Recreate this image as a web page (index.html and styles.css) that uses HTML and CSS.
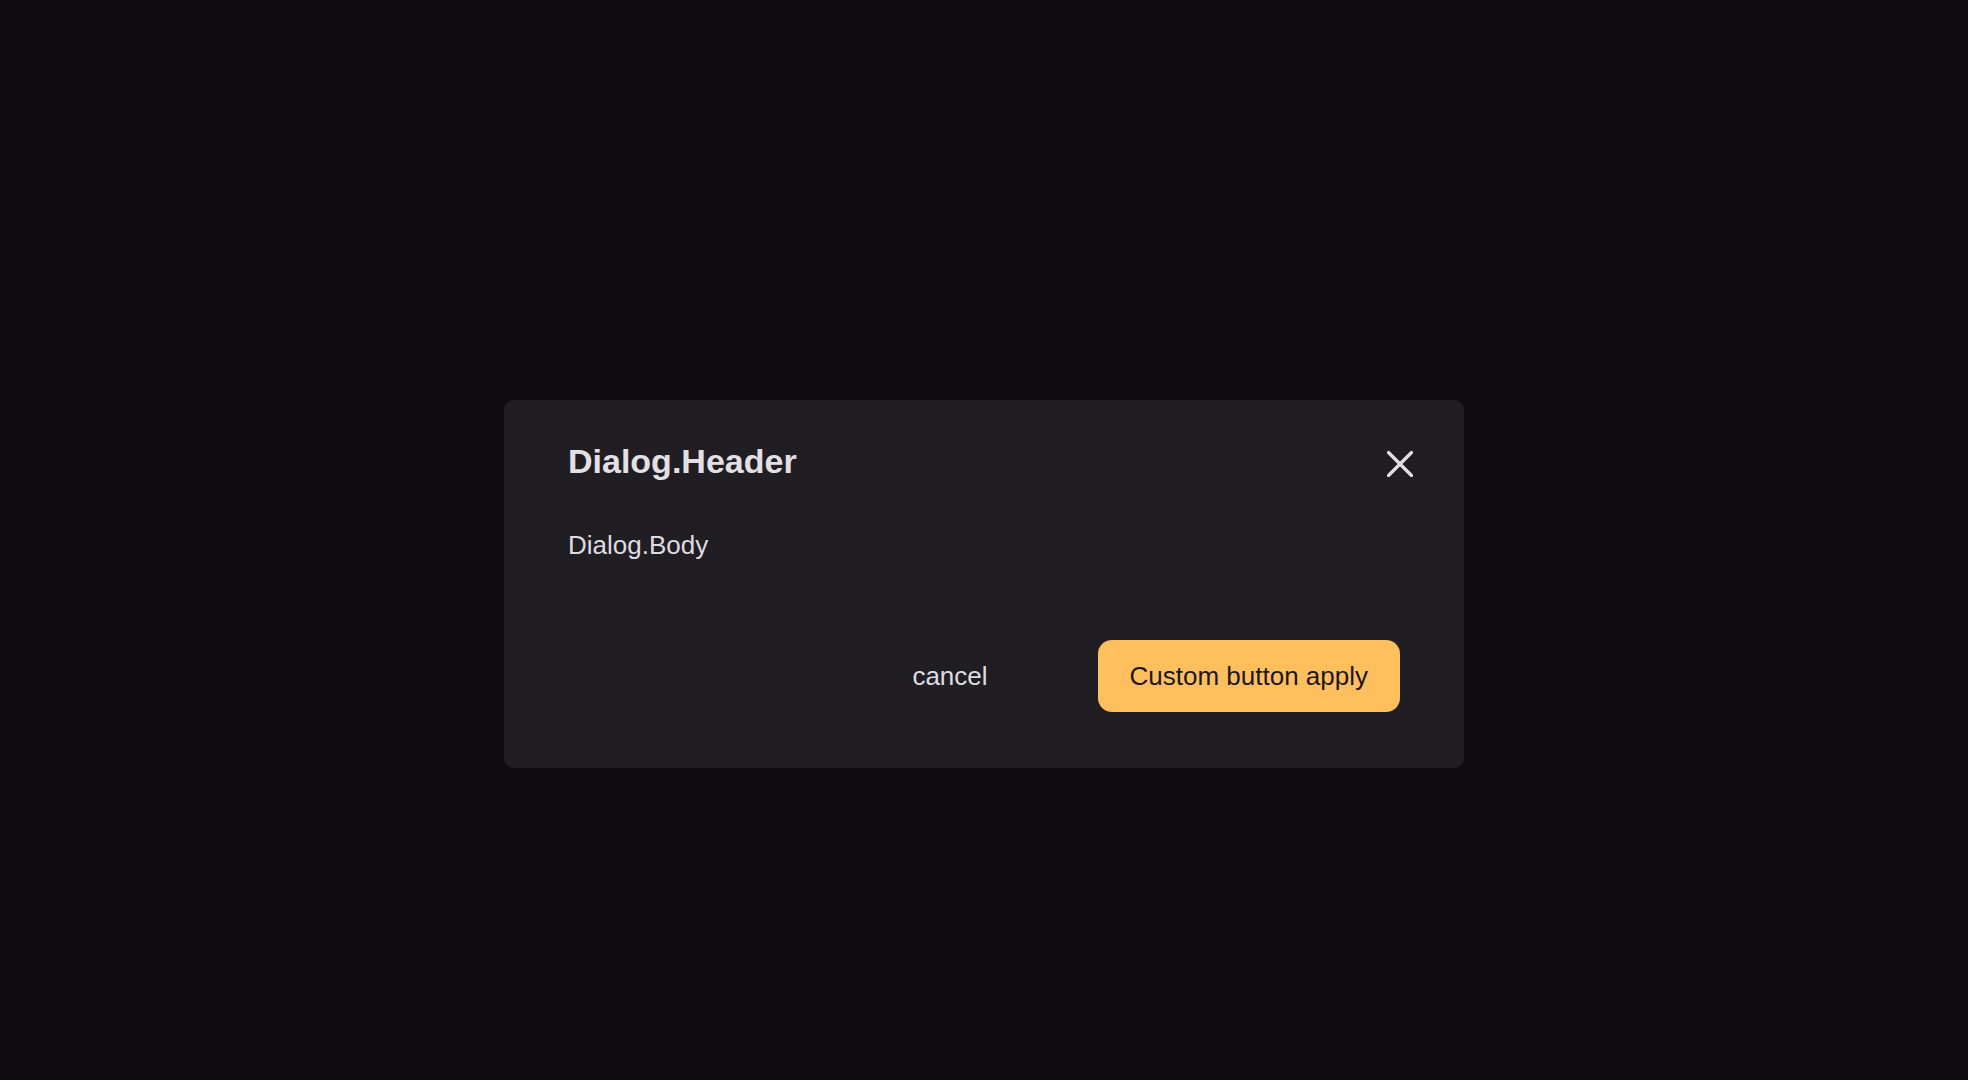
FILE: index.html
```html
<!DOCTYPE html>
<html lang="en">
<head>
<meta charset="utf-8">
<title>Dialog</title>
<link rel="stylesheet" href="styles.css">
</head>
<body>
<div class="backdrop">
  <div class="dialog" role="dialog">
    <button class="close" aria-label="Close">
      <svg viewBox="0 0 26 26" width="26" height="26"><path d="M1.5 1.5 L24.5 24.5 M24.5 1.5 L1.5 24.5" stroke="#e2e0e4" stroke-width="3.2" stroke-linecap="round" fill="none"/></svg>
    </button>
    <h2 class="header">Dialog.Header</h2>
    <div class="body">Dialog.Body</div>
    <div class="footer">
      <button class="btn btn-cancel">cancel</button>
      <button class="btn btn-apply">Custom button apply</button>
    </div>
  </div>
</div>
</body>
</html>
```
FILE: styles.css
```css
html, body {
  margin: 0;
  padding: 0;
  height: 100%;
}
body {
  background: #0e0c10;
  font-family: "Liberation Sans", Arial, sans-serif;
}
.backdrop {
  height: 100%;
  display: flex;
  align-items: flex-start;
  justify-content: center;
  padding-top: 400px;
  box-sizing: border-box;
}
.dialog {
  position: relative;
  width: 960px;
  box-sizing: border-box;
  background: #211e23;
  border-radius: 10px;
  padding: 42px 64px 56px 64px;
  display: flex;
  flex-direction: column;
}
.header {
  margin: 0;
  font-size: 34px;
  font-weight: 700;
  line-height: 39px;
  color: #e2e0e4;
}
.body {
  margin-top: 49px;
  font-size: 26px;
  line-height: 30px;
  color: #dedce0;
}
.close {
  position: absolute;
  top: 51px;
  left: 883px;
  width: 26px;
  height: 26px;
  padding: 0;
  border: 0;
  background: transparent;
  display: flex;
}
.footer {
  margin-top: 80px;
  display: flex;
  justify-content: flex-end;
  align-items: center;
  gap: 78px;
}
.btn {
  font-family: "Liberation Sans", Arial, sans-serif;
  font-size: 26px;
  height: 72px;
  padding: 0 32px;
  border: 0;
  border-radius: 14px;
  cursor: pointer;
}
.btn-cancel {
  background: transparent;
  color: #dedce0;
}
.btn-apply {
  background: #ffbf5c;
  color: #1a171c;
}
```
